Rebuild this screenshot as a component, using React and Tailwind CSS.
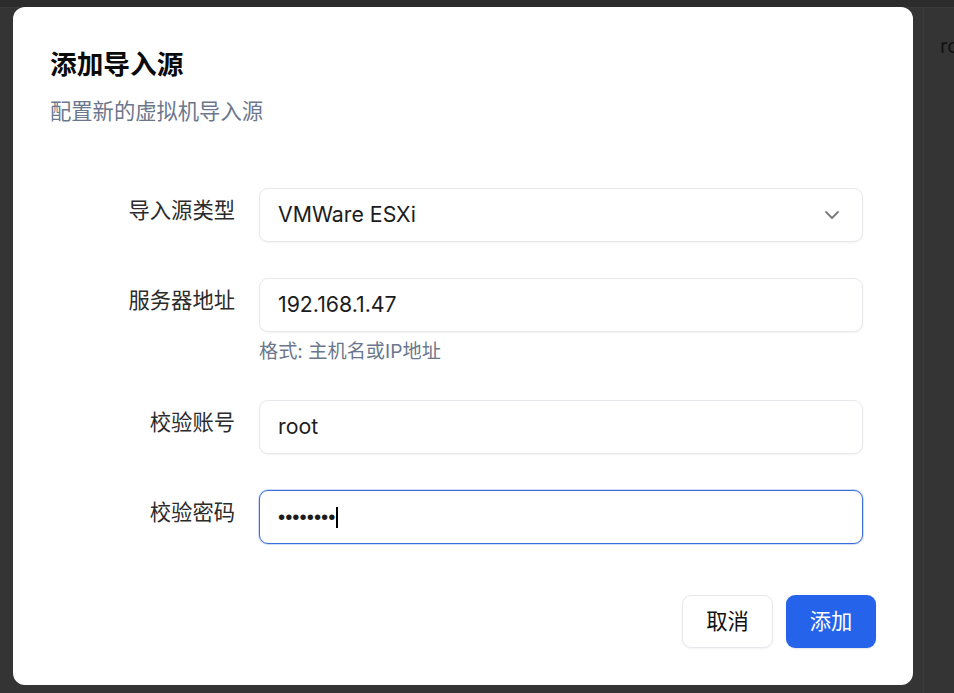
import { ChevronDown } from "lucide-react";

const font = { fontFamily: '"Inter", "Noto Sans CJK SC", sans-serif' };

const Field = ({ label, children, hint }) => (
  <div className="flex gap-[24px]">
    <div className="w-[185px] shrink-0 pt-[6px] text-right text-[21.3px] leading-[32px] text-[#2b2b2b]">
      {label}
    </div>
    <div className="flex-1">
      {children}
      {hint && (
        <p className="mt-[6px] text-[19.2px] leading-[26px] text-[#6b778c]">{hint}</p>
      )}
    </div>
  </div>
);

const Box = ({ children, focused }) => (
  <div
    className={
      "flex h-[54px] items-center rounded-[9px] bg-white px-[18px] text-[21.3px] text-[#1c1c1c] " +
      (focused
        ? "border-[1.6px] border-[#3a6fd8] shadow-[0_0_0_1px_rgba(59,111,216,0.25)]"
        : "border border-[#e6e8ec] shadow-[0_1px_2px_rgba(0,0,0,0.05)]")
    }
  >
    {children}
  </div>
);

export default function App() {
  return (
    <div className="relative h-[693px] w-[954px] overflow-hidden bg-[#343434]" style={font}>
      {/* dimmed page behind the dialog */}
      <div className="flex h-full flex-col">
        <div className="h-[8px] border-b border-[#3b3b3b] bg-[#2c2c2c]" />
        <div className="flex flex-1">
          <div className="w-[923px] shrink-0" />
          <div className="flex-1 overflow-hidden whitespace-nowrap border-l border-[#3a3a3a] pl-[16px] pt-[23px] text-[20px] text-[#111]">
            ro
          </div>
        </div>
      </div>

      <div className="absolute left-[13px] top-[7px] flex h-[678px] w-[900px] flex-col rounded-[12px] bg-white px-[37px] pt-[40px] pb-[37px]">
        <h1 className="text-[26.7px] font-bold leading-[34px] text-[#0a0a0a]">添加导入源</h1>
        <p className="mt-[14px] text-[21.3px] leading-[32px] text-[#6b778c]">配置新的虚拟机导入源</p>

        <div className="mt-[61px] flex flex-col gap-[36px] pr-[13px]">
          <Field label="导入源类型">
            <Box>
              <span className="flex-1">VMWare ESXi</span>
              <ChevronDown size={24} strokeWidth={1.8} className="text-[#7a7a7a]" />
            </Box>
          </Field>
          <Field label="服务器地址" hint="格式: 主机名或IP地址">
            <Box>192.168.1.47</Box>
          </Field>
          <Field label="校验账号">
            <Box>root</Box>
          </Field>
          <Field label="校验密码">
            <Box focused>
              <span className="text-[20.5px]" style={{ fontFamily: '"Liberation Sans", sans-serif' }}>
                ••••••••
              </span>
              <span className="ml-[1px] h-[21px] w-[2px] bg-black" />
            </Box>
          </Field>
        </div>

        <div className="mt-auto flex justify-end gap-[13px]">
          <button className="h-[53px] w-[91px] rounded-[9px] border border-[#e6e8ec] bg-white text-[21.3px] text-[#111] shadow-[0_1px_2px_rgba(0,0,0,0.05)]">
            取消
          </button>
          <button className="h-[53px] w-[90px] rounded-[9px] bg-[#2563eb] text-[21.3px] text-white shadow-[0_1px_2px_rgba(0,0,0,0.1)]">
            添加
          </button>
        </div>
      </div>
    </div>
  );
}
